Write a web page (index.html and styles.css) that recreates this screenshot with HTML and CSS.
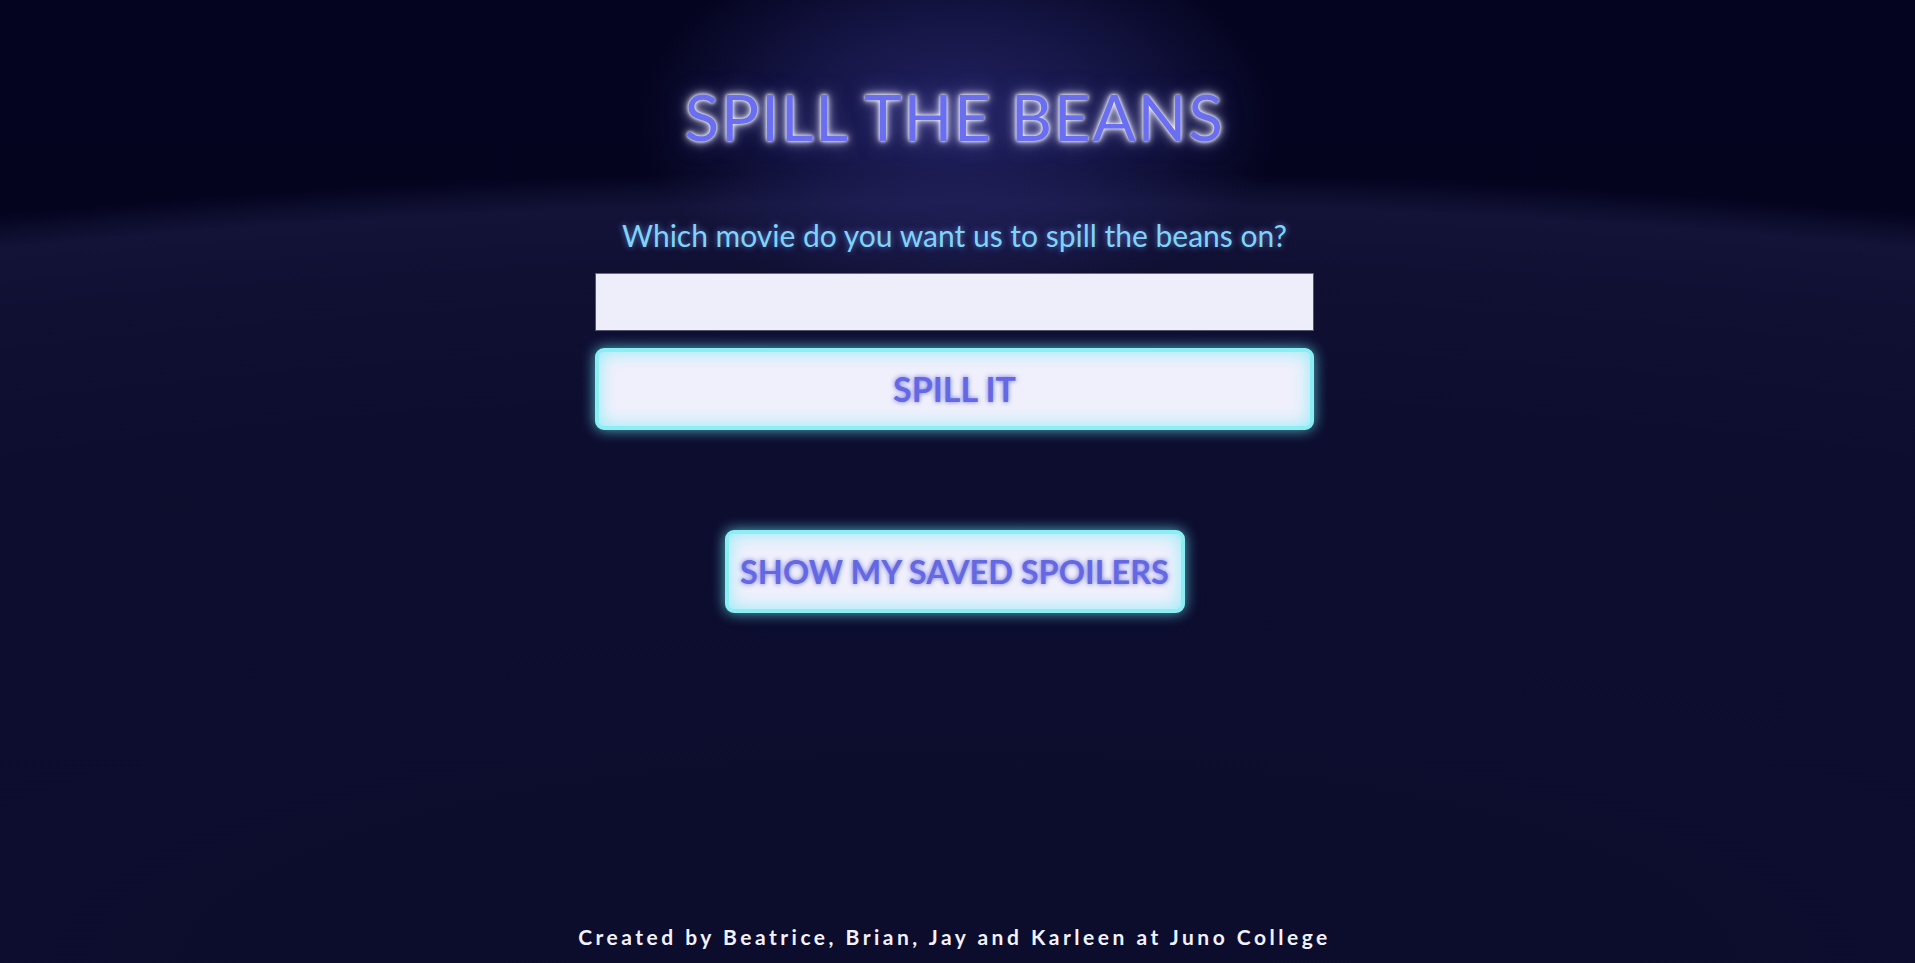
FILE: index.html
```html
<!DOCTYPE html>
<html lang="en">
<head>
<meta charset="utf-8">
<title>Spill The Beans</title>
<link rel="stylesheet" href="styles.css">
</head>
<body>
<div class="page">
  <header class="hero">
    <h1 class="title">SPILL THE BEANS</h1>
  </header>
  <main class="content">
    <form class="search">
      <label class="prompt" for="movie">Which movie do you want us to spill the beans on?</label>
      <input class="search-input" id="movie" type="text">
      <button class="btn btn-wide" type="button">SPILL IT</button>
    </form>
    <button class="btn btn-saved" type="button">SHOW MY SAVED SPOILERS</button>
  </main>
  <footer class="footer">Created by Beatrice, Brian, Jay and Karleen at Juno College</footer>
</div>
</body>
</html>
```
FILE: styles.css
```css
* { box-sizing: border-box; }
html, body { margin: 0; padding: 0; }
body {
  font-family: "Lato", "Noto Sans", sans-serif;
  background: #05051f;
}
.page {
  height: 100vh;
  min-height: 963px;
  padding-right: 6px;
  display: flex;
  flex-direction: column;
  align-items: center;
  background:
    radial-gradient(ellipse 320px 190px at 50% 118px, rgba(48, 48, 128, 0.7) 0%, rgba(40, 40, 110, 0.45) 55%, rgba(30, 30, 90, 0) 100%),
    radial-gradient(ellipse 2900px 800px at 50% 970px, #0c0c2d 0%, #0d0d2f 70%, #101033 88%, #131338 96%, rgba(19, 19, 56, 0) 100%),
    linear-gradient(#040420, #05051f);
}
.hero { padding-top: 79px; }
.title {
  margin: 0;
  font-family: "Lato", sans-serif;
  font-weight: 400;
  font-size: 64px;
  line-height: 1.2;
  color: #6a6ef0;
  letter-spacing: 1.7px;
  text-shadow: 0 0 3px rgba(255, 255, 255, 1), 0 0 6px rgba(245, 245, 255, 0.95), 0 0 12px rgba(220, 220, 255, 0.75), 0 0 22px rgba(150, 150, 255, 0.5);
}
.content {
  display: flex;
  flex-direction: column;
  align-items: center;
  width: 719px;
  margin-top: 61px;
}
.search {
  display: flex;
  flex-direction: column;
  align-items: center;
  width: 100%;
}
.prompt {
  font-size: 30px;
  line-height: 1.2;
  color: #80d4f7;
  text-shadow: 0 0 6px rgba(110, 160, 255, 0.7);
}
.search-input {
  width: 100%;
  height: 58px;
  margin-top: 20px;
  background: #eeeefb;
  border: 1px solid #55556e;
  border-top-color: #6a6a80;
  font-family: inherit;
  font-size: 24px;
  padding: 0 12px;
}
.btn {
  font-family: "Lato", sans-serif;
  font-weight: 700;
  font-size: 32.5px;
  color: #6468e2;
  text-shadow: 0 0 5px rgba(90, 90, 220, 0.85);
  background: #f0f0fc;
  border: 4px solid #8aeef3;
  border-radius: 9px;
  box-shadow: 0 0 14px rgba(100, 220, 235, 0.8), inset 0 0 18px rgba(140, 235, 245, 0.95);
  cursor: pointer;
}
.btn-wide {
  width: 100%;
  height: 82px;
  margin-top: 17px;
  font-size: 34px;
}
.btn-saved {
  width: 460px;
  height: 83px;
  margin-top: 100px;
  padding: 0;
}
.footer {
  margin-top: auto;
  padding-bottom: 14px;
  font-weight: 700;
  font-size: 21px;
  line-height: 24px;
  letter-spacing: 3.5px;
  color: #f2f2ff;
}
```
